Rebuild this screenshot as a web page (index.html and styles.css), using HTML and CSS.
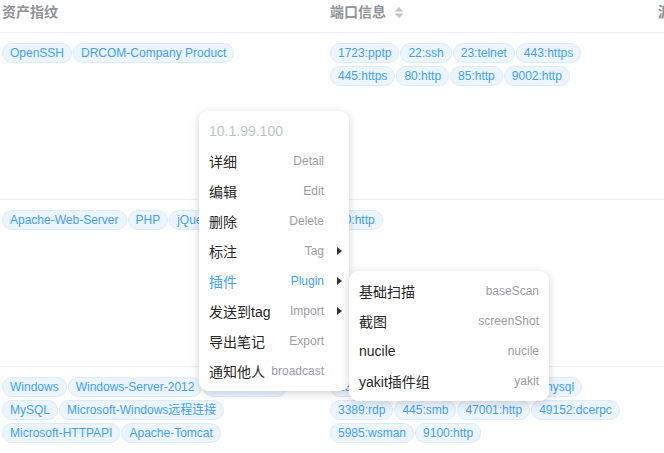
FILE: index.html
```html
<!DOCTYPE html>
<html lang="zh-CN">
<head>
<meta charset="utf-8">
<title>资产列表</title>
<link rel="stylesheet" href="styles.css">
</head>
<body>
<div class="table">
  <div class="row head">
    <div class="cell">资产指纹</div>
    <div class="cell">端口信息
      <svg class="sort" width="10" height="11" viewBox="0 0 10 11"><path d="M0.5 4.5 L5 0 L9.5 4.5 Z M0.5 6.5 L9.5 6.5 L5 11 Z" fill="#c0c4cc"/></svg>
    </div>
    <div class="cell">漏洞信息</div>
  </div>
  <div class="row">
    <div class="cell"><div class="tags">
      <span class="tag">OpenSSH</span><span class="tag">DRCOM-Company Product</span>
    </div></div>
    <div class="cell"><div class="tags">
      <span class="tag">1723:pptp</span><span class="tag">22:ssh</span><span class="tag">23:telnet</span><span class="tag">443:https</span><span class="tag">445:https</span><span class="tag">80:http</span><span class="tag">85:http</span><span class="tag">9002:http</span>
    </div></div>
    <div class="cell"></div>
  </div>
  <div class="row">
    <div class="cell"><div class="tags">
      <span class="tag">Apache-Web-Server</span><span class="tag">PHP</span><span class="tag">jQuery</span>
    </div></div>
    <div class="cell"><div class="tags">
      <span class="tag">80:http</span>
    </div></div>
    <div class="cell"></div>
  </div>
  <div class="row">
    <div class="cell"><div class="tags">
      <span class="tag">Windows</span><span class="tag">Windows-Server-2012</span><span class="tag">Microsoft-IIS</span><span class="tag">MySQL</span><span class="tag">Microsoft-Windows远程连接</span><span class="tag">Microsoft-HTTPAPI</span><span class="tag">Apache-Tomcat</span>
    </div></div>
    <div class="cell"><div class="tags">
      <span class="tag">135:msrpc</span><span class="tag">139:netbios-ssn</span><span class="tag">3306:mysql</span><span class="tag">3389:rdp</span><span class="tag">445:smb</span><span class="tag">47001:http</span><span class="tag">49152:dcerpc</span><span class="tag">5985:wsman</span><span class="tag">9100:http</span>
    </div></div>
    <div class="cell"></div>
  </div>
</div>

<div class="menu">
  <div class="menu-title">10.1.99.100</div>
  <div class="item"><span class="zh">详细</span><span class="en">Detail</span></div>
  <div class="item"><span class="zh">编辑</span><span class="en">Edit</span></div>
  <div class="item"><span class="zh">删除</span><span class="en">Delete</span></div>
  <div class="item"><span class="zh">标注</span><span class="en">Tag</span><i class="arrow"></i></div>
  <div class="item active"><span class="zh">插件</span><span class="en">Plugin</span><i class="arrow"></i></div>
  <div class="item"><span class="zh">发送到tag</span><span class="en">Import</span><i class="arrow"></i></div>
  <div class="item"><span class="zh">导出笔记</span><span class="en">Export</span></div>
  <div class="item"><span class="zh">通知他人</span><span class="en">broadcast</span></div>
</div>

<div class="submenu">
  <div class="item"><span class="zh">基础扫描</span><span class="en">baseScan</span></div>
  <div class="item"><span class="zh">截图</span><span class="en">screenShot</span></div>
  <div class="item"><span class="zh">nucile</span><span class="en">nucile</span></div>
  <div class="item"><span class="zh">yakit插件组</span><span class="en">yakit</span></div>
</div>
</body>
</html>
```

FILE: styles.css
```css
html, body {
  margin: 0;
  padding: 0;
  background: #fff;
  overflow: hidden;
  width: 664px;
  height: 453px;
}
body {
  position: relative;
  font-family: "Liberation Sans", Arial, "Noto Sans CJK SC", sans-serif;
  color: #606266;
}
.table {
  width: 1000px;
  margin-left: -8px;
}
.row {
  display: grid;
  grid-template-columns: 328px 328px 344px;
  height: 166px;
  border-bottom: 1px solid #ebeef5;
}
.row.head {
  height: 32px;
}
.cell {
  padding: 10px 10px 0;
  min-width: 0;
}
.head .cell {
  padding-top: 0;
  line-height: 25px;
  font-size: 14px;
  font-weight: bold;
  color: #909399;
  white-space: nowrap;
  display: flex;
  align-items: center;
  height: 25px;
}
.sort {
  margin-left: 8px;
}
.tags {
  display: flex;
  flex-wrap: wrap;
  gap: 3px 1px;
}
.tag {
  box-sizing: border-box;
  height: 20px;
  line-height: 18px;
  padding: 0 7px;
  border: 1px solid #d9ecff;
  background: #ecf5ff;
  color: #409eff;
  border-radius: 10px;
  font-size: 12px;
  white-space: nowrap;
}
.menu, .submenu {
  position: absolute;
  background: #fff;
  border-radius: 9px;
  box-shadow: 0 2px 10px rgba(0, 0, 0, 0.18);
  padding: 5px 0;
}
.menu {
  left: 199px;
  top: 111px;
  width: 150px;
}
.submenu {
  left: 349px;
  top: 271px;
  width: 200px;
}
.menu-title {
  height: 30px;
  line-height: 30px;
  padding: 0 10px;
  font-size: 14px;
  color: #b7c7c7;
}
.item {
  position: relative;
  height: 30px;
  display: flex;
  align-items: center;
  justify-content: space-between;
  padding: 0 10px;
}
.menu .item {
  padding-right: 25px;
}
.zh {
  font-size: 14px;
  color: #262626;
}
.en {
  font-size: 12px;
  color: #9a9aa6;
}
.item.active .zh, .item.active .en {
  color: #409eff;
}
.arrow {
  position: absolute;
  right: 7px;
  top: 11px;
  width: 0;
  height: 0;
  border-top: 4px solid transparent;
  border-bottom: 4px solid transparent;
  border-left: 5px solid #333;
}
```
